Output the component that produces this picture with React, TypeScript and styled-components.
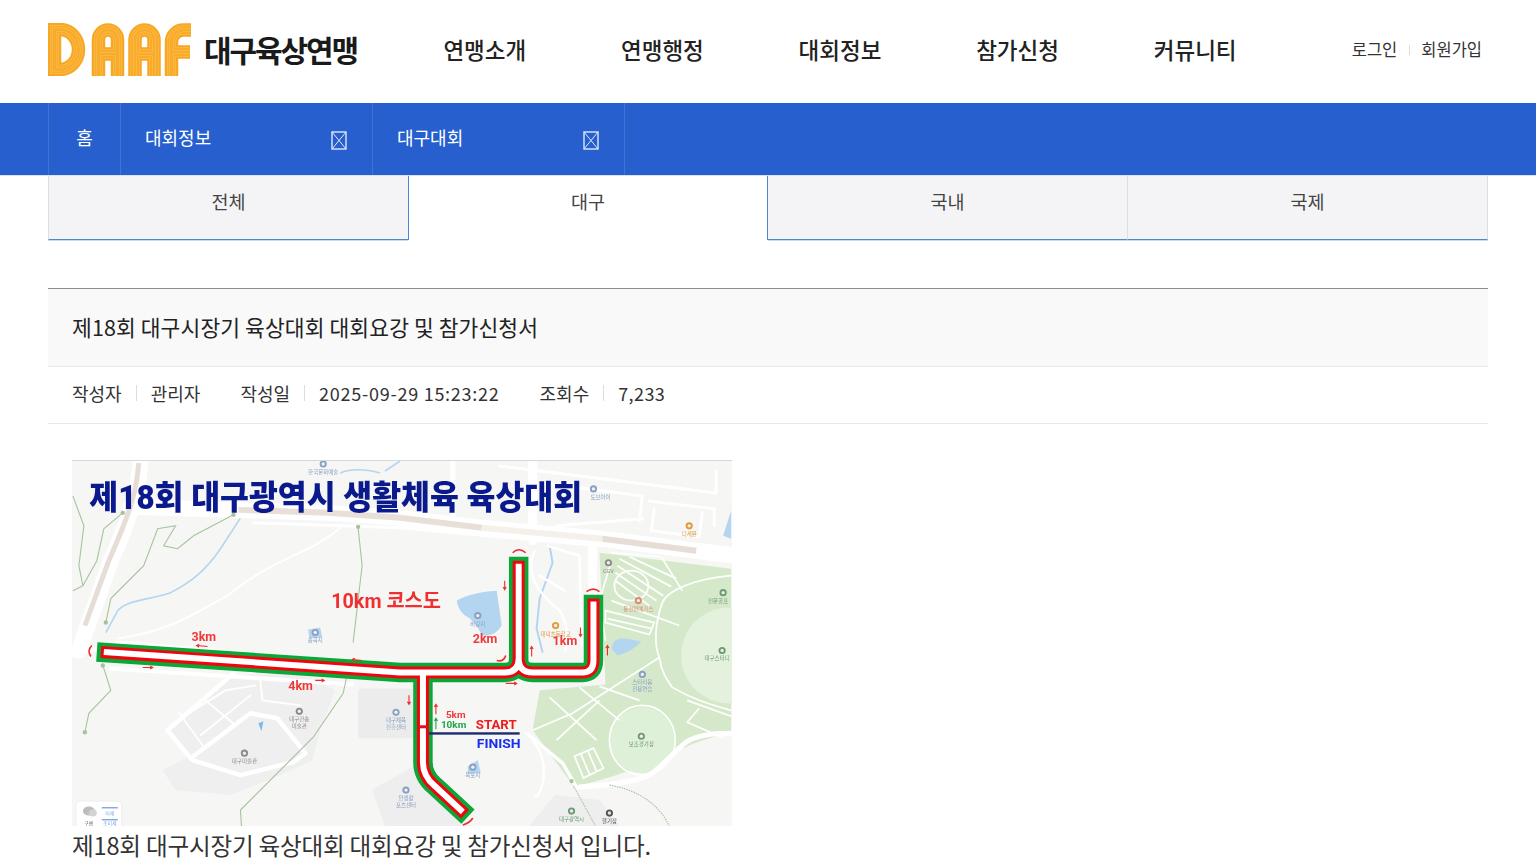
import React from 'react';
import styled, { createGlobalStyle } from 'styled-components';

const GlobalStyle = createGlobalStyle`
  html, body {
    margin: 0;
    padding: 0;
    background: #ffffff;
    font-family: "Noto Sans CJK KR", "Noto Sans", sans-serif;
    color: #222222;
  }
  * { box-sizing: border-box; }
`;

const Header = styled.header`
  display: flex;
  align-items: center;
  height: 103px;
  padding: 0 54px 5px 48px;
`;

const Brand = styled.a`
  display: flex;
  align-items: center;
  gap: 13px;
  width: 348px;
  flex: none;
`;

const BrandName = styled.span`
  font-size: 30px;
  font-weight: 700;
  letter-spacing: -2.1px;
  color: #1a1a1a;
  white-space: nowrap;
`;

const MainNav = styled.nav`
  display: grid;
  grid-template-columns: repeat(5, 177.6px);
`;

const NavItem = styled.a`
  text-align: center;
  font-size: 22.5px;
  font-weight: 500;
  color: #222222;
`;

const UserLinks = styled.div`
  display: flex;
  align-items: center;
  margin-left: auto;
  font-size: 16.5px;
  color: #333333;
`;

const UserDivider = styled.i`
  width: 1px;
  height: 10px;
  margin: 2px 11.5px 0;
  background: #dddddd;
`;

const SubBar = styled.div`
  position: relative;
  display: flex;
  height: 72px;
  padding-left: 48px;
  background: #275fce;
  box-shadow: 0 1px 0 #d8e2f6;
`;

const HomeCell = styled.a`
  display: flex;
  align-items: center;
  justify-content: center;
  width: 72px;
  padding-bottom: 4px;
  border-left: 1px solid rgba(255, 255, 255, 0.12);
  font-size: 18px;
  color: #ffffff;
`;

const DropCell = styled.a`
  display: flex;
  align-items: center;
  justify-content: space-between;
  width: 252px;
  padding: 0 25px 0 24px;
  border-left: 1px solid rgba(255, 255, 255, 0.12);
  font-size: 18px;
  color: #ffffff;
  &:last-child { border-right: 1px solid rgba(255, 255, 255, 0.12); width: 253px; }
  span { padding-bottom: 4px; }
`;

const Container = styled.main`
  padding: 0 48px;
`;

const Tabs = styled.div`
  display: grid;
  grid-template-columns: repeat(4, 1fr);
  height: 65px;
`;

const Tab = styled.a<{ $divider?: boolean }>`
  display: flex;
  align-items: center;
  justify-content: center;
  padding-bottom: 13px;
  font-size: 18.5px;
  color: #444444;
  background: #f4f4f6;
  border-bottom: 1px solid #4f86cf;
  border-right: ${(p) => (p.$divider ? '1px solid #dedee2' : 'none')};
  box-shadow: 0 1px 0 #c5daf3;
  &:first-child { border-left: 1px solid #dedee2; }
`;

const ActiveTab = styled.a`
  display: flex;
  align-items: center;
  justify-content: center;
  padding-bottom: 13px;
  font-size: 18.5px;
  color: #444444;
  background: #ffffff;
  border-left: 1px solid #4f86cf;
  border-right: 1px solid #4f86cf;
`;

const ViewHead = styled.div`
  margin-top: 48px;
  height: 79px;
  display: flex;
  align-items: center;
  padding: 0 24px 2px;
  border-top: 1px solid #8c8c8c;
  border-bottom: 1px solid #e8e8e8;
  background: #f9f9f9;
  font-size: 21.5px;
  letter-spacing: 0.1px;
  color: #222222;
`;

const MetaRow = styled.div`
  display: flex;
  align-items: center;
  height: 57px;
  padding: 0 24px 4px;
  border-bottom: 1px solid #e8e8e8;
  font-size: 18px;
  color: #333333;
`;

const MetaGroup = styled.div`
  display: flex;
  align-items: center;
  margin-right: 40px;
`;

const MetaLabel = styled.span`
  display: flex;
  align-items: center;
  &::after {
    content: '';
    width: 1px;
    height: 16px;
    margin: 0 14px;
    background: #dddddd;
  }
`;

const MetaNumber = styled.span<{ $spacing: number }>`
  letter-spacing: ${(p) => p.$spacing}px;
`;

const ViewBody = styled.div`
  padding: 36px 24px 0;
`;

const MapFigure = styled.svg`
  display: block;
  width: 660px;
  height: 366px;
  background: #f6f6f5;
  border-top: 1px solid #d8d8d8;
  filter: blur(0.4px);
`;

const BodyText = styled.p`
  margin: 1px 0 0;
  font-size: 23.6px;
  line-height: 36px;
  color: #333333;
  letter-spacing: -0.2px;
  white-space: nowrap;
`;

function LogoMark() {
  const letters = [
    'M54.5,29.5 H60 A18.5,20 0 0 1 60,69.5 H54.5 Z',
    'M98.5,76 V40 A9.5,10 0 0 1 117.5,40 V76 M98.5,54 H117.5',
    'M135,76 V40 A9.5,10 0 0 1 154,40 V76 M135,54 H154',
    'M171.5,76 V42 A12,12 0 0 1 183.5,30 H191 M171.5,52 H190',
  ];
  return (
    <svg width="143" height="53" viewBox="48 23 143 53" aria-label="DAAF">
      {letters.map((d) => (
        <g key={d} fill="none">
          <path d={d} stroke="#f8a722" strokeWidth="13.5" />
          <path d={d} stroke="#fcc25e" strokeWidth="9" />
          <path d={d} stroke="#f9ab2a" strokeWidth="8" />
          <path d={d} stroke="#fcc25e" strokeWidth="4" />
          <path d={d} stroke="#f9ab2a" strokeWidth="3" />
        </g>
      ))}
    </svg>
  );
}

function BrokenGlyph() {
  return (
    <svg width="16" height="19" viewBox="0 0 16 19" style={{ marginTop: 3 }}>
      <rect x="1" y="1" width="14" height="17" fill="none" stroke="#dfe8fa" strokeWidth="1.4" />
      <path d="M1 1 L15 18 M15 1 L1 18" stroke="#dfe8fa" strokeWidth="1" />
    </svg>
  );
}

// route ends grow a little per layer so the green closes round the red
function routePaths(e: number) {
  return [
    `M${103 - e},651.5 L400,672 L505,672 Q519,672 519,658 L519,${563 - e}`,
    `M519,658 Q519,672 533,672 L583,672 Q594,672 594,660 L594,${601 - e}`,
    `M423,672 L423,762 Q423,776 435,786 L${463 + e * 0.74},${812 + e * 0.67}`,
  ].join(' ');
}

function PlaceLabel({ x, y, lines, color, textX }: { x: number; y: number; lines: string[]; color: string; textX?: number }) {
  return (
    <g>
      <circle cx={x} cy={y} r="3.6" fill={color} />
      <circle cx={x} cy={y} r="1.7" fill="#ffffff" fillOpacity="0.85" />
      {lines.map((l, i) => (
        <text key={l} x={textX ?? x} y={y + 10 + i * 7} fontSize="5.5" fill={color} textAnchor="middle">{l}</text>
      ))}
    </g>
  );
}

function Arrow({ x, y, dx, dy, color = '#ef2b2b' }: { x: number; y: number; dx: number; dy: number; color?: string }) {
  const angle = Math.atan2(dy, dx);
  const a1 = angle + 2.6;
  const a2 = angle - 2.6;
  const ex = x + dx;
  const ey = y + dy;
  return (
    <path
      d={`M${x},${y} L${ex},${ey} M${ex + Math.cos(a1) * 3},${ey + Math.sin(a1) * 3} L${ex},${ey} L${ex + Math.cos(a2) * 3},${ey + Math.sin(a2) * 3}`}
      fill="none"
      stroke={color}
      strokeWidth="1.1"
    />
  );
}

function CourseMap() {
  return (
    <MapFigure viewBox="72 460 660 366" fontFamily='Roboto, "Noto Sans CJK KR", sans-serif'>
      {/* grey building plots */}
      <path d="M232,675 L300,672 L335,690 L320,730 L312,760 L280,775 L230,795 L175,790 L162,770 L190,755 L165,730 Z" fill="#efefef" />
      <rect x="358" y="688" width="56" height="50" rx="3" fill="#ececec" />
      <path d="M372,790 L415,765 L470,826 L385,826 Z" fill="#eeeeee" />
      <path d="M530,826 L555,795 L600,800 L620,826 Z" fill="#eeeeee" />

      {/* park */}
      <path
        d="M600,552 L732,568 L732,733 C690,738 640,775 574,786 L533,730 L540,690 L606,684 Z"
        fill="#d5e9ca"
      />
      <circle cx="730" cy="655" r="48" fill="#e3f1dd" />
      <ellipse cx="643" cy="740" rx="32" ry="33" fill="#dff0d8" />
      <g fill="none" stroke="#ffffff" strokeWidth="1.7">
        <ellipse cx="632" cy="585" rx="17" ry="15" />
        <ellipse cx="643" cy="740" rx="33" ry="35" />
        <path d="M732,575 C695,578 668,590 663,602 C655,625 655,645 660,657 C662,672 668,680 673,687 C695,700 715,705 732,710" />
        <path d="M660,657 L573,713 L533,730" />
        <path d="M550,697 L597,740 M580,687 L620,720 M557,740 L600,700 M600,686 L640,700" />
        <path d="M612,552 L662,556 L683,590 M612,560 L600,600 L606,640 M612,600 L680,625" />
        <path d="M606,610 L655,622 L650,634 L606,622 Z M608,618 L652,628" />
        <path d="M700,708 L688,722 L725,738 M688,700 L732,716" />
        <path d="M575,756 L594,748 L604,768 L584,778 Z M581,753 L590,774 M588,750 L597,771" />
      </g>
      <path d="M620,558 L672,586 M630,556 L677,578 M618,565 L664,595 M616,572 L657,600 M616,580 L650,605" fill="none" stroke="#ffffff" strokeWidth="1.8" />

      {/* water */}
      <path d="M457,600 Q470,592 497,590 L502,625 Q495,637 482,635 Q478,625 470,618 Q458,612 457,600 Z" fill="#b4d5f0" />
      <path d="M612,648 Q614,636 626,638 L642,641 Q632,652 618,655 Z" fill="#b4d5f0" />
      <path d="M724,535 L732,510 L732,538 Z" fill="#b4d5f0" />
      <path d="M550,545 L553,562 L540,598 L537,628 L543,652" fill="none" stroke="#b4d5f0" strokeWidth="2" />
      <path d="M240,517 L220,548 C205,570 190,582 170,592 C145,600 125,600 117,610 L105,632" fill="none" stroke="#b4d5f0" strokeWidth="1.6" />
      <path d="M340,472 C350,468 365,468 380,472 M385,470 L400,460" fill="none" stroke="#b4d5f0" strokeWidth="1.6" />

      {/* roads */}
      <g fill="none" stroke="#ffffff" strokeLinejoin="round" strokeLinecap="round">
        <path d="M140,456 C138,490 132,510 110,560 L78,650" strokeWidth="16" />
        <path d="M130,506 L327,512 L400,517 L482,527 L603,538 L697,550 L736,555" strokeWidth="16" />
        <path d="M253,522 L400,527 L600,545" strokeWidth="3" />
        <path d="M533,456 L533,540 M593,545 L593,595" strokeWidth="9" />
        <path d="M453,456 L453,515" strokeWidth="5" />
        <path d="M500,465 L717,492 L717,470 M543,482 L643,495 M643,495 L640,520 M557,525 L643,518 M650,500 L715,508 L715,525 M655,508 L652,530 L700,536 L703,512" strokeWidth="3" />
        <path d="M535,550 C525,570 535,590 560,610 C570,625 568,640 566,650 M548,545 L580,555 L582,645 M540,575 L565,590" strokeWidth="2.4" />
        <path d="M72,655 L118,642 L350,662 M110,668 L352,684" strokeWidth="4" />
        <path d="M233,673 L167,730 L190,758 L250,713 L277,718 L305,753 L293,762 L240,775 L192,760" strokeWidth="4.5" />
        <path d="M185,715 L225,690 L255,685 M200,735 L250,695 M178,712 L202,745 M205,700 L235,725 M260,680 L262,700 L300,705" strokeWidth="1.8" />
        <path d="M117,638 C170,630 190,615 227,595 C245,580 255,575 267,568 C290,555 320,545 340,527" strokeWidth="2" />
        <path d="M527,733 L563,763 L577,787" strokeWidth="3.5" />
        <path d="M533,740 C550,760 545,790 536,797" strokeWidth="2.5" />
        <path d="M580,787 C610,785 640,782 653,773 C670,760 680,745 690,740 C705,733 720,733 736,733" strokeWidth="5" />
      </g>
      <g fill="none">
        <path d="M138,462 C136,490 130,510 108,560" stroke="#e6ddd7" strokeWidth="5" />
        <path d="M108,560 L84,625" stroke="#e6ddd7" strokeWidth="5" />
        <path d="M238,509 L327,512 L400,517 L482,527" stroke="#e8dfd9" strokeWidth="6" />
        <path d="M482,527 L603,538" stroke="#f4f0ea" strokeWidth="6" />
        <path d="M603,538 L697,550" stroke="#e6ddd7" strokeWidth="6" />
      </g>

      {/* paths in green */}
      <g fill="none" stroke="#a5c49d" strokeWidth="1.1">
        <path d="M72,495 L83,525 L78,565 L82,585 L72,590 M122,512 L103,528 L96,560 L82,585" />
        <path d="M233,514 L193,535 L177,548 L163,545 L175,525 L157,528 L143,565 L110,598 L105,622" />
        <path d="M358,527 L362,565 L353,642 M350,660 L343,693 L313,737 L240,810 L241,826" />
        <path d="M102,665 L110,690 L88,713 L84,732" />
        <path d="M574,786 L590,815 L596,826 M610,785 C640,790 660,805 670,826" strokeDasharray="1.5 1" />
      </g>
      {[[122, 512], [233, 514], [358, 526], [105, 622], [84, 732], [102, 665], [572, 781]].map(([cx, cy]) => (
        <circle key={cx} cx={cx} cy={cy} r="2.2" fill="#a5c49d" />
      ))}

      {/* course */}
      <g fill="none">
        <path d={routePaths(7)} stroke="#0aa838" strokeWidth="19.5" />
        <path d={routePaths(3)} stroke="#f0050f" strokeWidth="12" />
        <path d={routePaths(0)} stroke="#ffffff" strokeWidth="6" />
      </g>
      <rect x="420" y="725" width="9" height="3" fill="#e0101a" />
      <rect x="429" y="732" width="91" height="2.4" fill="#1c2d6e" />

      {/* turn marks */}
      <g fill="none" stroke="#ef2b2b" strokeWidth="1.6">
        <path d="M513,552 Q519,546 526,552" />
        <path d="M587,591 Q594,586 600,591" />
        <path d="M90,656 Q86,650 91,645" />
        <path d="M463,825 Q470,823 473,818" />
        <path d="M497,660 Q504,662 506,655" />
      </g>
      <Arrow x={207} y={646} dx={-11} dy={-1} />
      <Arrow x={142} y={667} dx={10} dy={0} />
      <Arrow x={362} y={660} dx={-10} dy={-1} />
      <Arrow x={315} y={680} dx={9} dy={0} />
      <Arrow x={506} y={683} dx={11} dy={0} />
      <Arrow x={409} y={695} dx={0} dy={9} />
      <Arrow x={505} y={580} dx={0} dy={9} />
      <Arrow x={581} y={627} dx={0} dy={9} />
      <Arrow x={532} y={656} dx={0} dy={-10} />
      <Arrow x={608} y={655} dx={0} dy={-10} />
      <Arrow x={436} y={714} dx={0} dy={-10} />
      <Arrow x={436} y={729} dx={0} dy={-11} color="#1fa64a" />

      {/* places */}
      <path d="M308,629 L320,627 L322,637 L309,638 Z" fill="#b4d5f0" />
      <path d="M468,766 L478,760 L481,773 L468,774 Z" fill="#b4d5f0" />
      <path d="M258,723 L263,721 L261,731 Z" fill="#7fb8e8" />
      <PlaceLabel x={323} y={463} lines={['한국문화예술']} color="#8aa0c0" />
      <PlaceLabel x={594} y={488} lines={['토브아이']} textX={601} color="#8aa0c0" />
      <PlaceLabel x={690} y={525} lines={['디세뮨']} color="#e09a3a" />
      <PlaceLabel x={609} y={562} lines={['CGV']} color="#8a8a8a" />
      <PlaceLabel x={639} y={600} lines={['동경원예가스']} color="#d98a70" />
      <PlaceLabel x={724} y={592} lines={['전문골프']} textX={719} color="#6e9a72" />
      <PlaceLabel x={723} y={650} lines={['대구스타디']} textX={718} color="#6e9a72" />
      <PlaceLabel x={643} y={674} lines={['스타리움', '전용연습']} color="#8aa0c0" />
      <PlaceLabel x={642} y={736} lines={['보조경기장']} color="#6e9a72" />
      <PlaceLabel x={478} y={615} lines={['바랑지']} color="#8aa0c0" />
      <PlaceLabel x={556} y={625} lines={['대덕초등학교']} color="#e09a3a" />
      <PlaceLabel x={299} y={711} lines={['대구간송', '미술관']} color="#8a8a8a" />
      <PlaceLabel x={244} y={753} lines={['대구미술관']} color="#8a8a8a" />
      <PlaceLabel x={396} y={712} lines={['대구체육', '진흥센터']} color="#8aa0c0" />
      <PlaceLabel x={406} y={790} lines={['인생활', '포츠센터']} color="#8aa0c0" />
      <PlaceLabel x={473} y={767} lines={['옥포지']} color="#8aa0c0" />
      <PlaceLabel x={315} y={632} lines={['송곡지']} color="#8aa0c0" />
      <PlaceLabel x={572} y={811} lines={['대구광역시']} color="#6e9a72" />
      <PlaceLabel x={610} y={813} lines={['헬기장']} color="#555555" />

      {/* weather widget */}
      <rect x="75" y="801" width="46" height="30" rx="4" fill="#ffffff" stroke="#eeeeee" />
      <ellipse cx="88" cy="811" rx="6" ry="4.5" fill="#bdbdbd" />
      <ellipse cx="92" cy="813" rx="4" ry="3.5" fill="#d2d2d2" />
      <rect x="101" y="807" width="16" height="1.4" fill="#7fa6e0" />
      <rect x="101" y="819" width="16" height="1.4" fill="#7fa6e0" />
      <text x="109" y="815" fontSize="5" fill="#7fa6e0" textAnchor="middle">미세</text>
      <text x="109" y="825" fontSize="5" fill="#7fa6e0" textAnchor="middle">초미세</text>
      <text x="88" y="825" fontSize="5" fill="#666666" textAnchor="middle">구름</text>

      {/* captions */}
      <text x="88.5" y="508" fontSize="33" fontWeight="900" fill="#0a1a8c" textLength="494" lengthAdjust="spacingAndGlyphs">
        제18회 대구광역시 생활체육 육상대회
      </text>
      <text x="331" y="607" fontSize="20" fontWeight="700" fill="#f03030" textLength="110" lengthAdjust="spacingAndGlyphs">
        10km 코스도
      </text>
      <g fontSize="12.5" fontWeight="700" fill="#f03a3a">
        <text x="191" y="641">3km</text>
        <text x="288" y="690">4km</text>
        <text x="473" y="643">2km</text>
        <text x="553" y="645">1km</text>
      </g>
      <text x="446" y="717.5" fontSize="10" fontWeight="700" fill="#f03a3a">5km</text>
      <text x="441" y="728" fontSize="10" fontWeight="700" fill="#1fa64a">10km</text>
      <text x="476" y="729" fontSize="12.5" fontWeight="700" fill="#ee1c1c" textLength="41" lengthAdjust="spacingAndGlyphs">START</text>
      <text x="477" y="748" fontSize="12.5" fontWeight="700" fill="#1a2ef0" textLength="44" lengthAdjust="spacingAndGlyphs">FINISH</text>
    </MapFigure>
  );
}

export default function App() {
  return (
    <>
      <GlobalStyle />
      <Header>
        <Brand>
          <LogoMark />
          <BrandName>대구육상연맹</BrandName>
        </Brand>
        <MainNav>
          {['연맹소개', '연맹행정', '대회정보', '참가신청', '커뮤니티'].map((item) => (
            <NavItem key={item}>{item}</NavItem>
          ))}
        </MainNav>
        <UserLinks>
          <a>로그인</a>
          <UserDivider />
          <a>회원가입</a>
        </UserLinks>
      </Header>
      <SubBar>
        <HomeCell>홈</HomeCell>
        <DropCell>
          <span>대회정보</span>
          <BrokenGlyph />
        </DropCell>
        <DropCell>
          <span>대구대회</span>
          <BrokenGlyph />
        </DropCell>
      </SubBar>
      <Container>
        <Tabs>
          <Tab>전체</Tab>
          <ActiveTab>대구</ActiveTab>
          <Tab $divider>국내</Tab>
          <Tab $divider>국제</Tab>
        </Tabs>
        <ViewHead>제18회 대구시장기 육상대회 대회요강 및 참가신청서</ViewHead>
        <MetaRow>
          <MetaGroup>
            <MetaLabel>작성자</MetaLabel>
            <span>관리자</span>
          </MetaGroup>
          <MetaGroup>
            <MetaLabel>작성일</MetaLabel>
            <MetaNumber $spacing={0.74}>2025-09-29 15:23:22</MetaNumber>
          </MetaGroup>
          <MetaGroup>
            <MetaLabel>조회수</MetaLabel>
            <MetaNumber $spacing={0.4}>7,233</MetaNumber>
          </MetaGroup>
        </MetaRow>
        <ViewBody>
          <CourseMap />
          <BodyText>제18회 대구시장기 육상대회 대회요강 및 참가신청서 입니다.</BodyText>
        </ViewBody>
      </Container>
    </>
  );
}
